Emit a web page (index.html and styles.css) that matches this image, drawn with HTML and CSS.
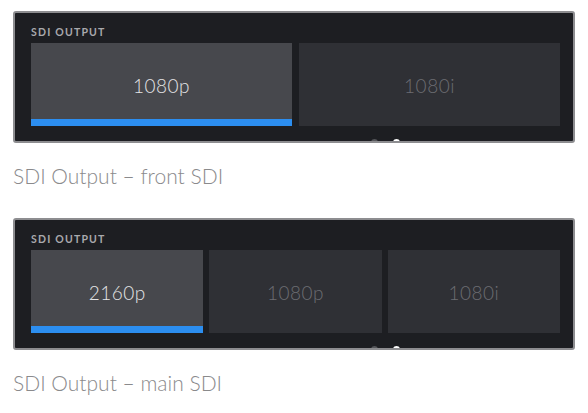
FILE: index.html
```html
<!DOCTYPE html>
<html>
<head>
<meta charset="utf-8">
<link rel="stylesheet" href="styles.css">
</head>
<body>
<div class="page">
  <section class="figure">
    <div class="panel">
      <div class="label">SDI OUTPUT</div>
      <div class="options two">
        <div class="opt active">1080p</div>
        <div class="opt">1080i</div>
      </div>
      <div class="dots"><span class="dot dim"></span><span class="dot on"></span></div>
    </div>
    <p class="caption">SDI Output – front SDI</p>
  </section>
  <section class="figure second">
    <div class="panel">
      <div class="label">SDI OUTPUT</div>
      <div class="options three">
        <div class="opt active">2160p</div>
        <div class="opt">1080p</div>
        <div class="opt">1080i</div>
      </div>
      <div class="dots"><span class="dot dim"></span><span class="dot on"></span></div>
    </div>
    <p class="caption">SDI Output – main SDI</p>
  </section>
</div>
</body>
</html>
```
FILE: styles.css
```css
html, body {
  margin: 0;
  padding: 0;
  background: #ffffff;
}
.page {
  padding: 11px 13px 0 13px;
  width: 562px;
  font-family: Lato, "Open Sans", sans-serif;
}
.figure.second {
  margin-top: 30px;
}
.panel {
  background: #1d1e22;
  border: 2px solid #8d8d90;
  border-radius: 3px;
  padding: 13px 13px 0 16px;
  overflow: hidden;
}
.label {
  font-size: 10.5px;
  line-height: 12px;
  font-weight: 700;
  letter-spacing: 1.2px;
  color: #a9a9ad;
  margin-bottom: 5px;
}
.options {
  display: grid;
  height: 83px;
}
.options.two {
  grid-template-columns: 1fr 1fr;
  column-gap: 7px;
}
.options.three {
  grid-template-columns: 1fr 1fr 1fr;
  column-gap: 6px;
}
.opt {
  background: #2f3035;
  color: #6c6d72;
  font-size: 19px;
  font-weight: 300;
  letter-spacing: 0.5px;
  display: flex;
  align-items: center;
  justify-content: center;
  padding-top: 1px;
  box-sizing: border-box;
}
.opt.active {
  background: #47484d;
  color: #e4e4e6;
  border-bottom: 7px solid #2c8ef0;
  padding-top: 8px;
}
.dots {
  height: 15px;
  display: flex;
  align-items: flex-end;
  gap: 15px;
  padding-left: 340px;
}
.dot {
  width: 7px;
  height: 7px;
  border-radius: 50%;
  margin-bottom: -5px;
}
.dot.dim { background: #55565a; }
.dot.on { background: #ffffff; }
.caption {
  margin: 0;
  padding-top: 21px;
  font-size: 21px;
  line-height: 24px;
  font-weight: 300;
  color: #8a8a8c;
}
```
